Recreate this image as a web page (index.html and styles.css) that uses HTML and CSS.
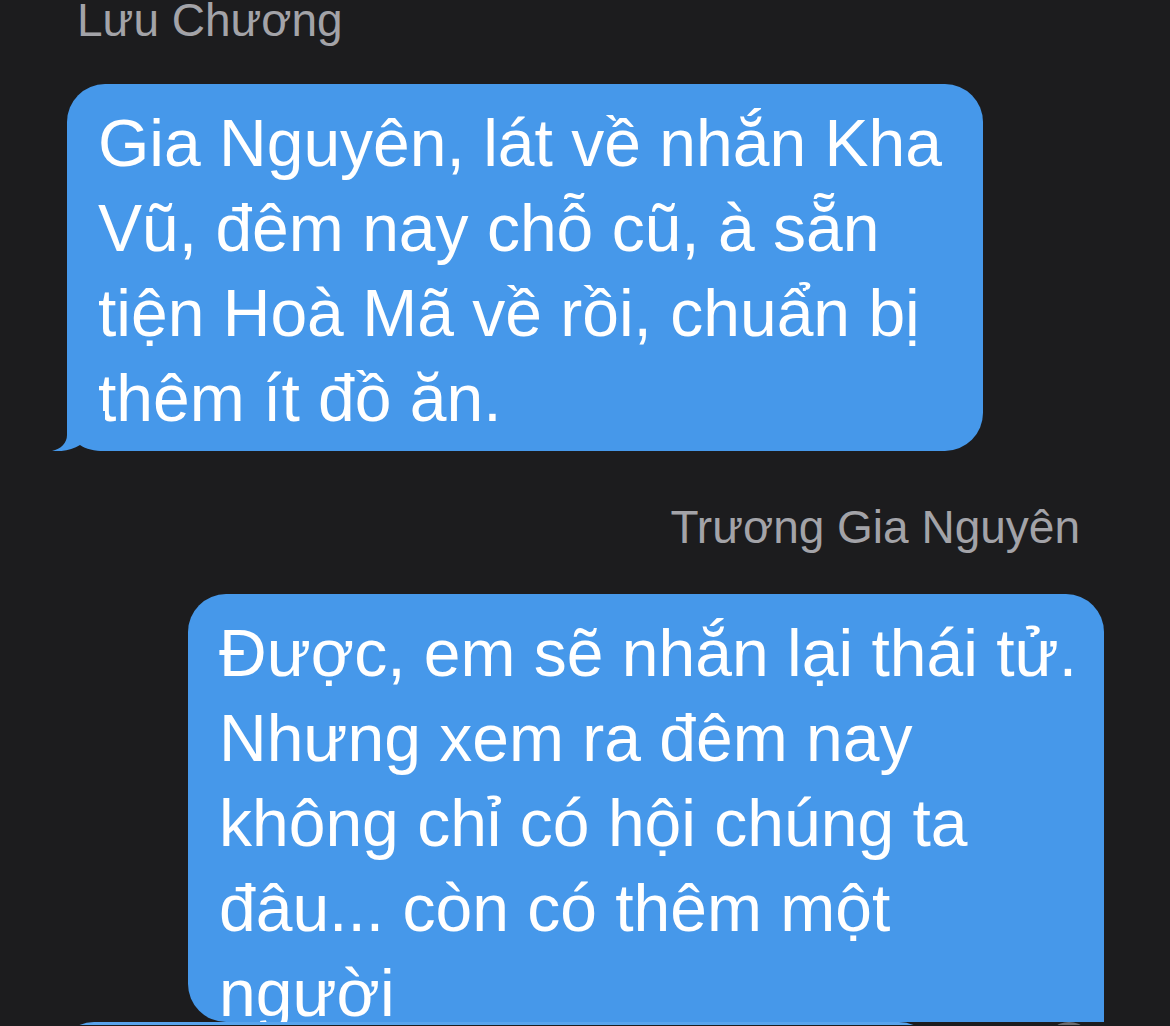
FILE: index.html
```html
<!DOCTYPE html>
<html>
<head>
    <title>Tin nhắn</title>
    <meta charset="utf-8">
    <meta name="viewport" content="width=device-width, initial-scale=1.0">
    <link rel="stylesheet" href="styles.css">
</head>
<body>
    <div class="thread">
        <div class="sender">Lưu Chương</div>
        <div class="msg msg-in">
            <div class="bubble bubble-in">
                Gia Nguyên, lát về nhắn Kha Vũ, đêm nay chỗ cũ, à sẵn tiện Hoà Mã về rồi, chuẩn bị thêm ít đồ ăn.
                <svg class="tail" viewBox="0 -10 56 40" width="56" height="40">
                    <path d="M15,-10 L15,14 C15,22 9,28 0,30 C9,31 20,29 28,24 C34,28 42,30 53,30 L53,-10 Z" fill="#4698ea"/>
                </svg>
            </div>
        </div>

        <div class="sender sender-out">Trương Gia Nguyên</div>
        <div class="msg msg-out">
            <div class="bubble bubble-out">
                Được, em sẽ nhắn lại thái tử. Nhưng xem ra đêm nay không chỉ có hội chúng ta đâu... còn có thêm một người
            </div>
        </div>

        <!-- next message, only its top edge is in view -->
        <div class="msg msg-next">
            <div class="bubble-next"></div>
            <span class="dot"></span>
        </div>
    </div>
</body>
</html>
```

FILE: styles.css
```css
body { margin: 0; background: #1c1c1e; font-family: "Liberation Sans", Arial, sans-serif; overflow: hidden; }
.thread { display: flex; flex-direction: column; }
.sender { font-size: 46px; line-height: 40px; color: #a3a3a8; padding-left: 77px; }
.sender-out { text-align: right; padding-left: 0; padding-right: 90px; margin-top: 56px; }
.msg { display: flex; }
.msg-in { padding-left: 67px; margin-top: 44px; }
.msg-out { justify-content: flex-end; padding-right: 66px; margin-top: 47px; }
.bubble { position: relative; box-sizing: border-box; max-width: 916px; background: #4698ea; color: #fff; font-size: 66px; line-height: 85px; border-radius: 38px; padding: 17px 24px 10px 31px; }
.bubble-out { height: 428px; overflow: hidden; border-radius: 38px 38px 0 38px; }
.tail { position: absolute; left: -15px; bottom: 0; display: block; }
.msg-next { align-items: flex-start; padding-left: 56px; height: 3px; overflow: hidden; }
.bubble-next { width: 881px; height: 60px; background: #58a4ee; border-radius: 38px 38px 0 0; }
.dot { width: 48px; height: 48px; margin-left: 108px; border-radius: 50%; background: #6c6c70; }
```
